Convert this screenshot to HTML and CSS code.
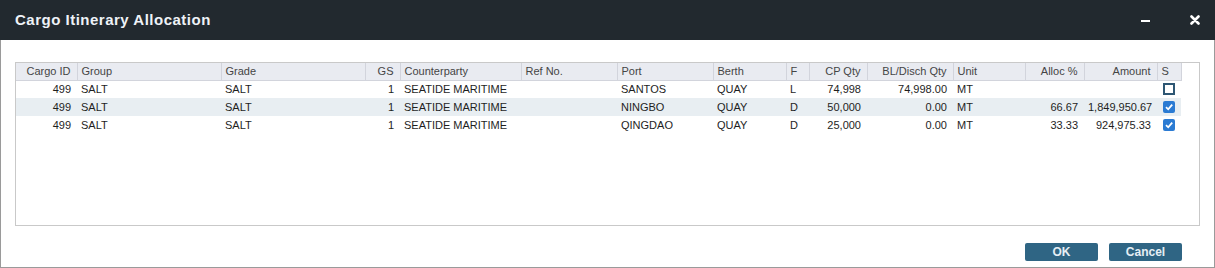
FILE: index.html
```html
<html>

<head>
    <title>Cargo Itinerary Allocation</title>
    <link rel="stylesheet" href="styles.css">
</head>

<body>
    <div class="dialog">
        <div class="titlebar">
            <span class="title">Cargo Itinerary Allocation</span>
            <div class="tools">
                <span class="tool-min"></span>
                <span class="tool-close">
                    <svg width="10" height="10" viewBox="0 0 10 10">
                        <path d="M1.5 1.5 L8.5 8.5 M8.5 1.5 L1.5 8.5" stroke="#ffffff" stroke-width="2.6" stroke-linecap="round"/>
                    </svg>
                </span>
            </div>
        </div>
        <div class="content">
            <div class="grid">
                <table id="alloc">
                    <colgroup>
                        <col style="width: 61px">
                        <col style="width: 144px">
                        <col style="width: 144px">
                        <col style="width: 35px">
                        <col style="width: 121px">
                        <col style="width: 96px">
                        <col style="width: 96px">
                        <col style="width: 73px">
                        <col style="width: 23px">
                        <col style="width: 58px">
                        <col style="width: 86px">
                        <col style="width: 72px">
                        <col style="width: 59px">
                        <col style="width: 73px">
                        <col style="width: 24px">
                    </colgroup>
                    <thead>
                        <tr>
                            <th class="num">Cargo ID</th>
                            <th>Group</th>
                            <th>Grade</th>
                            <th class="num">GS</th>
                            <th>Counterparty</th>
                            <th>Ref No.</th>
                            <th>Port</th>
                            <th>Berth</th>
                            <th>F</th>
                            <th class="num">CP Qty</th>
                            <th class="num">BL/Disch Qty</th>
                            <th>Unit</th>
                            <th class="num">Alloc %</th>
                            <th class="num">Amount</th>
                            <th>S</th>
                        </tr>
                    </thead>
                    <tbody>
                        <tr>
                            <td class="num">499</td>
                            <td>SALT</td>
                            <td>SALT</td>
                            <td class="num">1</td>
                            <td>SEATIDE MARITIME</td>
                            <td></td>
                            <td>SANTOS</td>
                            <td>QUAY</td>
                            <td>L</td>
                            <td class="num">74,998</td>
                            <td class="num">74,998.00</td>
                            <td>MT</td>
                            <td class="num"></td>
                            <td class="num"></td>
                            <td class="sel"><span class="check"></span></td>
                        </tr>
                        <tr class="alt">
                            <td class="num">499</td>
                            <td>SALT</td>
                            <td>SALT</td>
                            <td class="num">1</td>
                            <td>SEATIDE MARITIME</td>
                            <td></td>
                            <td>NINGBO</td>
                            <td>QUAY</td>
                            <td>D</td>
                            <td class="num">50,000</td>
                            <td class="num">0.00</td>
                            <td>MT</td>
                            <td class="num">66.67</td>
                            <td class="num">1,849,950.67</td>
                            <td class="sel"><span class="check on"><svg width="10" height="10" viewBox="0 0 10 10"><path d="M2 5.2 L4.2 7.3 L8.2 2.6" stroke="#ffffff" stroke-width="1.8" fill="none"/></svg></span></td>
                        </tr>
                        <tr>
                            <td class="num">499</td>
                            <td>SALT</td>
                            <td>SALT</td>
                            <td class="num">1</td>
                            <td>SEATIDE MARITIME</td>
                            <td></td>
                            <td>QINGDAO</td>
                            <td>QUAY</td>
                            <td>D</td>
                            <td class="num">25,000</td>
                            <td class="num">0.00</td>
                            <td>MT</td>
                            <td class="num">33.33</td>
                            <td class="num">924,975.33</td>
                            <td class="sel"><span class="check on"><svg width="10" height="10" viewBox="0 0 10 10"><path d="M2 5.2 L4.2 7.3 L8.2 2.6" stroke="#ffffff" stroke-width="1.8" fill="none"/></svg></span></td>
                        </tr>
                    </tbody>
                </table>
            </div>
            <div class="actions">
                <button class="button">OK</button>
                <button class="button">Cancel</button>
            </div>
        </div>
    </div>
</body>
</html>
```

FILE: styles.css
```css
body {
    margin: 0;
    background: #ffffff;
    font-family: "Liberation Sans", Arial, Helvetica, sans-serif;
}

.dialog {
    width: 1215px;
    height: 268px;
    box-sizing: border-box;
    border: 1px solid #9a9a9a;
    border-top: none;
    display: flex;
    flex-direction: column;
    background: #ffffff;
}

.titlebar {
    height: 40px;
    margin: 0 -1px;
    background: #22292f;
    display: flex;
    align-items: center;
    justify-content: space-between;
    padding: 0 15px 0 15px;
}

.title {
    color: #eef2f7;
    font-size: 15px;
    font-weight: bold;
    letter-spacing: 0.5px;
    padding-bottom: 1px;
}

.tools {
    display: flex;
    align-items: center;
    gap: 40px;
}

.tool-min {
    width: 9px;
    height: 2px;
    background: #ffffff;
    margin-top: 1px;
}

.tool-close {
    display: flex;
    width: 10px;
    height: 10px;
}

.content {
    flex: 1;
    padding: 22px 14px 0 14px;
    display: flex;
    flex-direction: column;
}

.grid {
    height: 164px;
    box-sizing: border-box;
    border: 1px solid #c9c9c9;
}

#alloc {
    border-collapse: collapse;
    table-layout: fixed;
    width: 1165px;
    font-size: 11px;
}

#alloc th {
    height: 17px;
    padding: 0 4px;
    background-color: #e9ebf1;
    color: #454545;
    font-weight: normal;
    text-align: left;
    border-right: 1px solid #d2d4dc;
    border-bottom: 1px solid #d2d4dc;
    white-space: nowrap;
    overflow: hidden;
}

#alloc td {
    height: 18px;
    padding: 0 4px;
    color: #1e1e1e;
    white-space: nowrap;
    overflow: hidden;
}

#alloc .num {
    text-align: right;
    padding-right: 6px;
}

#alloc tr.alt td {
    background-color: #e8eef2;
}

#alloc td.sel {
    padding: 0 0 0 6px;
}

.check {
    display: block;
    width: 12px;
    height: 12px;
    box-sizing: border-box;
    border: 2px solid #2d5673;
    background: #ffffff;
}

.check.on {
    border: none;
    border-radius: 2px;
    background: #2b7bd3;
    display: flex;
    align-items: center;
    justify-content: center;
}

.actions {
    display: flex;
    justify-content: flex-end;
    gap: 11px;
    margin-top: 17px;
    padding-right: 18px;
}

.button {
    width: 73px;
    height: 18px;
    padding: 0;
    border: none;
    border-radius: 2px;
    background: #2f6584;
    color: #e6eef4;
    font-family: "Liberation Sans", Arial, Helvetica, sans-serif;
    font-size: 12px;
    font-weight: bold;
}
```
